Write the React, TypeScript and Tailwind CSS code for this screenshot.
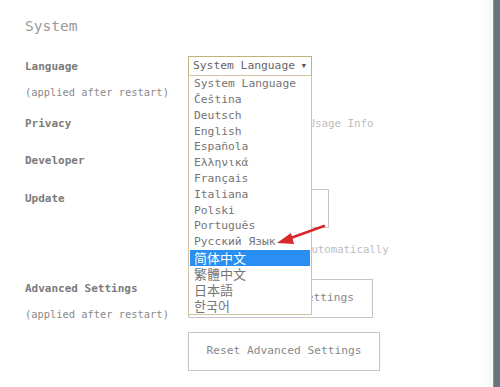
import React from "react";

const mono = { fontFamily: '"DejaVu Sans Mono", "Liberation Mono", monospace' };

const langs: { t: string; cjk?: boolean; sel?: boolean }[] = [
  { t: "System Language" },
  { t: "Čeština" },
  { t: "Deutsch" },
  { t: "English" },
  { t: "Española" },
  { t: "Ελληνικά" },
  { t: "Français" },
  { t: "Italiana" },
  { t: "Polski" },
  { t: "Português" },
  { t: "Русский Язык" },
  { t: "简体中文", cjk: true, sel: true },
  { t: "繁體中文", cjk: true },
  { t: "日本語", cjk: true },
  { t: "한국어", cjk: true },
];

function Row({ label, sub, children, className = "" }: { label: string; sub?: string; children?: React.ReactNode; className?: string }) {
  return (
    <div className={"flex " + className}>
      <div className="w-[163px] shrink-0 flex flex-col">
        <div className="h-[20px] leading-[20px] text-[11px] font-bold text-[#7b7b7b]">{label}</div>
        {sub && <div className="mt-[5px] h-[20px] leading-[20px] text-[10.4px] text-[#8a8a8a]">{sub}</div>}
      </div>
      <div className="flex flex-col">{children}</div>
    </div>
  );
}

export default function App() {
  return (
    <div className="relative w-[500px] h-[387px] bg-white flex overflow-hidden" style={mono}>
      <div className="flex-1 flex flex-col pl-[25px] pt-[16px]">
        <div className="h-[20px] leading-[20px] text-[14.5px] text-[#9a9a9a]">System</div>

        <Row label="Language" sub="(applied after restart)" className="mt-[21px]">
          <div className="-mt-[1px] w-[124px] h-[20px] border border-[#c2b27a] flex items-center justify-between px-[4px] text-[11.3px] text-[#666]">
            <span>System Language</span>
            <span className="text-[7px] text-[#555] mr-[1px]">▼</span>
          </div>
        </Row>

        <Row label="Privacy" className="mt-[12px]">
          <div className="h-[20px] flex items-center gap-[4px] text-[10.8px] text-[#bdbdbd]">
            <span className="w-[12px] h-[12px] border border-[#bbb] ml-[3px] mr-[69px]" />
            <span>Send Usage Info</span>
          </div>
        </Row>

        <Row label="Developer" className="mt-[17px]">
          <div className="h-[20px]" />
        </Row>

        <Row label="Update" className="mt-[18px]">
          <div className="w-[141px] h-[39px] border border-[#c4c4c4]" />
          <div className="mt-[12px] h-[20px] flex items-center text-[10.7px] text-[#bdbdbd]">
            <span className="ml-[117px]">automatically</span>
          </div>
        </Row>

        <Row label="Advanced Settings" sub="(applied after restart)" className="mt-[19px]">
          <div className="w-[185px] h-[39px] border border-[#c4c4c4] flex items-center justify-end pr-[18px] text-[11.2px] text-[#888]">
            Settings
          </div>
          <div className="mt-[14px] w-[192px] h-[39px] border border-[#c4c4c4] flex items-center justify-center text-[11.2px] text-[#888]">
            Reset Advanced Settings
          </div>
        </Row>
      </div>

      <div className="w-[14px] bg-gradient-to-r from-white to-[#f6f7f7]" />
      <div className="w-[7px] bg-[#66777c] border-l border-[#889599]" />

      {/* dropdown list overlay */}
      <div className="absolute left-[188px] top-[75px] w-[124px] border border-[#cfc3a0] bg-white flex flex-col">
        {langs.map((l) => (
          <div
            key={l.t}
            className={
              "h-[15.8px] flex items-center pl-[4px] mx-[1px] leading-none " +
              (l.sel ? "bg-[#2a8ff2] text-white " : "text-[#757575] ") +
              (l.cjk ? "text-[13px]" : "text-[11.3px]")
            }
            style={l.cjk ? { fontFamily: '"Noto Sans CJK SC", "Noto Sans CJK KR", sans-serif' } : undefined}
          >
            {l.t}
          </div>
        ))}
        <div className="h-[1px]" />
      </div>

      {/* red arrow */}
      <svg className="absolute left-0 top-0 pointer-events-none" width="500" height="387">
        <line x1="324" y1="226" x2="288" y2="239" stroke="#d8282a" strokeWidth="2.5" strokeLinecap="round" />
        <polygon points="277,243 291,233 294,244" fill="#d8282a" />
      </svg>
    </div>
  );
}
